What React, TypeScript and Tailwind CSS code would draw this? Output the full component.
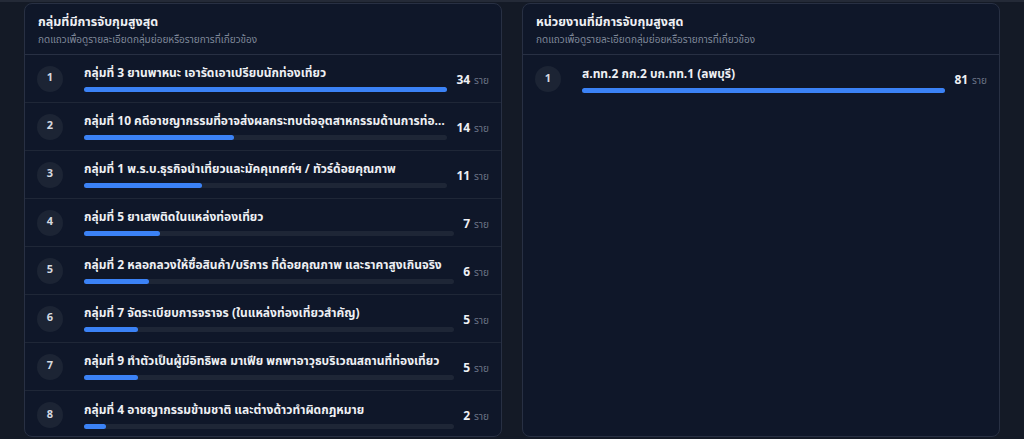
import React from 'react'

interface RankItem {
  label: string
  count: number
}

const groups: RankItem[] = [
  { label: 'กลุ่มที่ 3 ยานพาหนะ เอารัดเอาเปรียบนักท่องเที่ยว', count: 34 },
  { label: 'กลุ่มที่ 10 คดีอาชญากรรมที่อาจส่งผลกระทบต่ออุตสาหกรรมด้านการท่องเที่ยว', count: 14 },
  { label: 'กลุ่มที่ 1 พ.ร.บ.ธุรกิจนำเที่ยวและมัคคุเทศก์ฯ / ทัวร์ด้อยคุณภาพ', count: 11 },
  { label: 'กลุ่มที่ 5 ยาเสพติดในแหล่งท่องเที่ยว', count: 7 },
  { label: 'กลุ่มที่ 2 หลอกลวงให้ซื้อสินค้า/บริการ ที่ด้อยคุณภาพ และราคาสูงเกินจริง', count: 6 },
  { label: 'กลุ่มที่ 7 จัดระเบียบการจราจร (ในแหล่งท่องเที่ยวสำคัญ)', count: 5 },
  { label: 'กลุ่มที่ 9 ทำตัวเป็นผู้มีอิทธิพล มาเฟีย พกพาอาวุธบริเวณสถานที่ท่องเที่ยว', count: 5 },
  { label: 'กลุ่มที่ 4 อาชญากรรมข้ามชาติ และต่างด้าวทำผิดกฎหมาย', count: 2 },
]

const units: RankItem[] = [{ label: 'ส.ทท.2 กก.2 บก.ทท.1 (ลพบุรี)', count: 81 }]

const RankRow = ({ rank, item, max }: { rank: number; item: RankItem; max: number }) => {
  const pct = (item.count / max) * 100
  return (
    <div className="flex h-[48px] cursor-pointer items-center border-b border-[#1f2737] pl-[12px] pr-[12px] last:border-b-0">
      <div className="flex h-[26px] w-[26px] shrink-0 items-center justify-center rounded-full bg-[#1c2434] text-[11px] font-bold text-[#d5d9e0]">
        {rank}
      </div>
      <div className="ml-[21px] flex min-w-0 flex-1 flex-col gap-[6px]">
        <p className="truncate text-[12px] leading-[16px] font-bold text-[#eef0f4]">{item.label}</p>
        <div className="h-[5px] w-full rounded-full bg-[#1e2636]">
          <div className="h-full rounded-full bg-[#3b82f6]" style={{ width: `${pct}%` }} />
        </div>
      </div>
      <div className="ml-[9px] flex shrink-0 items-baseline gap-[4px] pt-[2px]">
        <span className="text-[12px] font-bold text-[#eef0f4]">{item.count}</span>
        <span className="text-[10px] text-[#6b7486]">ราย</span>
      </div>
    </div>
  )
}

const RankCard = ({ title, items }: { title: string; items: RankItem[] }) => {
  const max = Math.max(...items.map((i) => i.count))
  return (
    <div className="flex h-[434px] flex-col overflow-hidden rounded-[8px] border border-[#283043] bg-[#0f1729]">
      <div className="h-[51px] shrink-0 border-b border-[#283043] px-[13px] pt-[10px]">
        <h2 className="text-[12.5px] leading-[18px] font-bold text-[#eef0f4]">{title}</h2>
        <p className="mt-[1px] text-[10px] leading-[14px] text-[#7f8899]">
          กดแถวเพื่อดูรายละเอียดกลุ่มย่อยหรือรายการที่เกี่ยวข้อง
        </p>
      </div>
      <div className="flex flex-col">
        {items.map((item, i) => (
          <RankRow key={item.label} rank={i + 1} item={item} max={max} />
        ))}
      </div>
    </div>
  )
}

export default function App() {
  return (
    <div
      className="h-[439px] w-[1024px] overflow-hidden border-t-2 border-[#242a37] bg-[#141a26]"
      style={{ fontFamily: '"Noto Sans Thai", "Noto Sans", "Liberation Sans", sans-serif' }}
    >
      <div className="grid grid-cols-2 gap-[20px] px-[24px] pt-[1px]">
        <RankCard title="กลุ่มที่มีการจับกุมสูงสุด" items={groups} />
        <RankCard title="หน่วยงานที่มีการจับกุมสูงสุด" items={units} />
      </div>
    </div>
  )
}
